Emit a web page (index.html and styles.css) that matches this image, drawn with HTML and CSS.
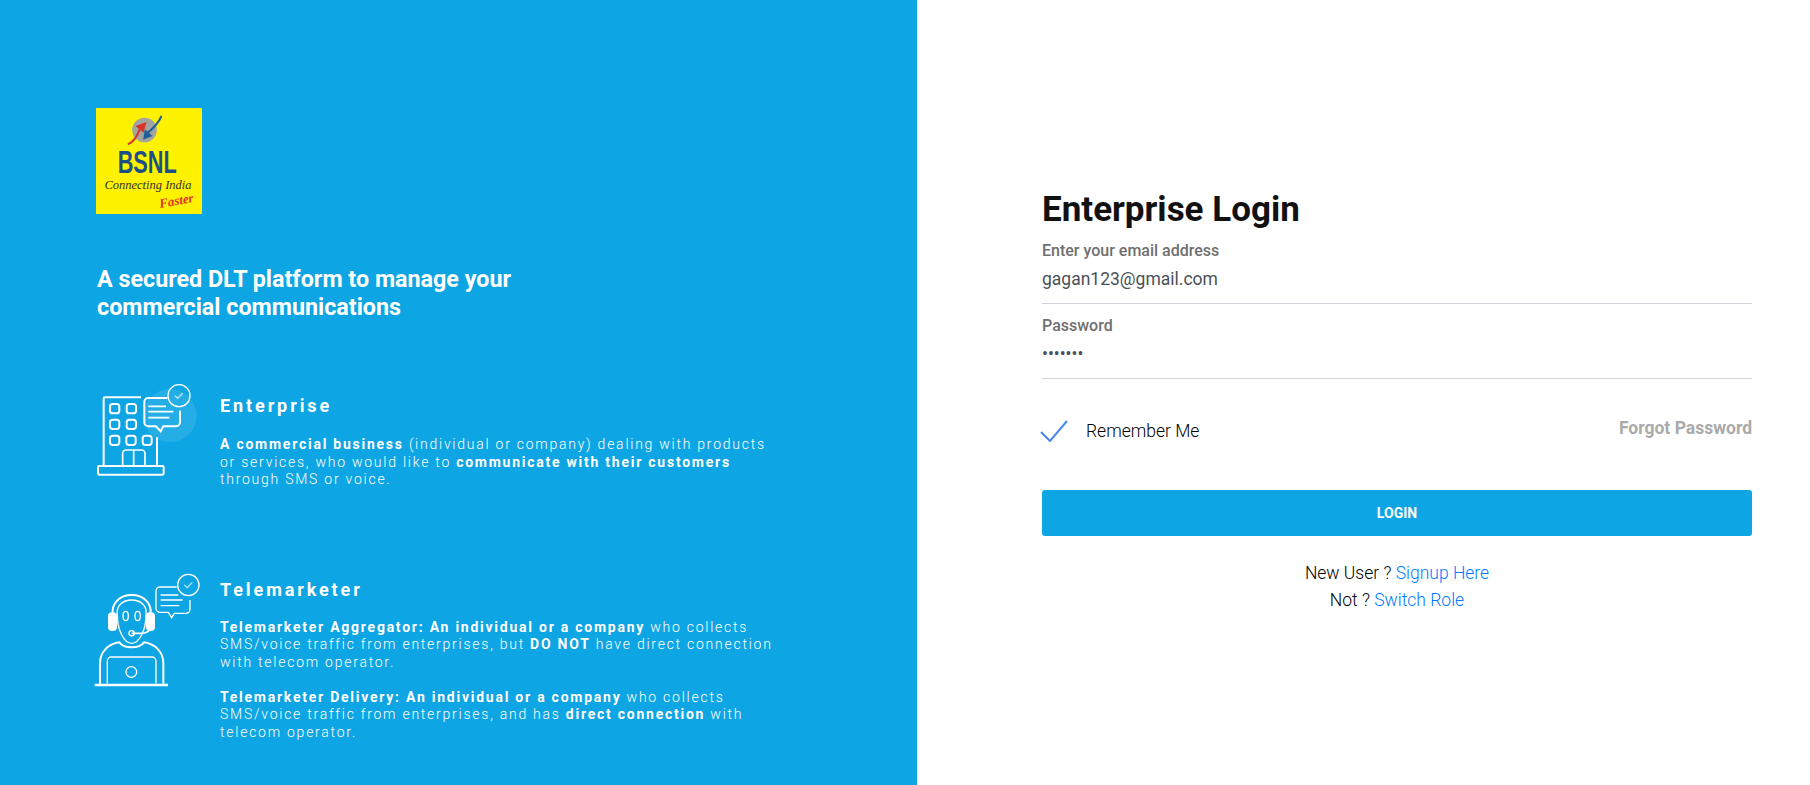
FILE: index.html
```html
<!DOCTYPE html>
<html lang="en">
<head>
  <meta charset="UTF-8">
  <title>Enterprise Login</title>
  <link rel="stylesheet" href="styles.css">
</head>
<body>
  <div class="page">
    <div class="left-panel">
      <div class="logo">
        <svg class="logo-mark" viewBox="135 72 110 96">
          <circle cx="190" cy="120" r="37" fill="#a3a3a0"/>
          <path d="M140 163C155 158 168 140 178 113" fill="none" stroke="#d8352a" stroke-width="6"/>
          <path d="M163 108L196 96L187 128Z" fill="#d8352a"/>
          <path d="M241 78C235 92 220 112 198 130" fill="none" stroke="#1f5f96" stroke-width="6"/>
          <path d="M186 149L191 118L214 138Z" fill="#1f5f96"/>
        </svg>
        <div class="logo-name">BSNL</div>
        <div class="logo-tag">Connecting India</div>
        <div class="logo-faster">Faster</div>
      </div>

      <h1 class="headline">A secured DLT platform to manage your<br>commercial communications</h1>

      <div class="role role-enterprise">
        <svg class="role-icon" viewBox="0 0 420 360" fill="none" stroke="#fff" stroke-width="6">
          <circle cx="270" cy="140" r="80" fill="#fff" fill-opacity=".1" stroke="none"/>
          <path d="M183 85H75a4 4 0 0 0-4 4V290"/>
          <path d="M231 205V290"/>
          <rect x="54" y="291" width="197" height="26" rx="4"/>
          <rect x="90" y="105" width="28" height="28" rx="8"/>
          <rect x="140" y="105" width="28" height="28" rx="8"/>
          <rect x="90" y="152" width="28" height="28" rx="8"/>
          <rect x="140" y="152" width="28" height="28" rx="8"/>
          <rect x="90" y="200" width="28" height="28" rx="8"/>
          <rect x="139" y="200" width="28" height="28" rx="8"/>
          <rect x="188" y="200" width="27" height="28" rx="8"/>
          <path d="M128 290V253a10 10 0 0 1 10-10h47a10 10 0 0 1 10 10V290M161 243V290" stroke-width="5"/>
          <path d="M262 87H205a12 12 0 0 0-12 12V160a12 12 0 0 0 12 12H228L242 187L250 172H288a12 12 0 0 0 12-12V125"/>
          <path d="M205 112H258M205 128H280M205 146H268" stroke-width="5"/>
          <circle cx="297" cy="80" r="33" stroke-width="4"/>
          <path d="M285 80L293 88L308 73" stroke-width="4" stroke-opacity=".7"/>
        </svg>
        <div class="role-text">
          <h2>Enterprise</h2>
          <p><b>A commercial business</b> (individual or company) dealing with products<br>or services, who would like to <b>communicate with their customers</b><br>through SMS or voice.</p>
        </div>
      </div>

      <div class="role role-tele">
        <svg class="role-icon" viewBox="0 0 420 390" fill="none" stroke="#fff" stroke-width="6">
          <path d="M99 150C92 115 120 90 155 90C190 90 218 115 211 150"/>
          <path d="M112 150C108 122 128 105 155 105C182 105 202 122 198 150C198 195 178 235 155 235C132 235 112 195 112 150Z" stroke-width="4"/>
          <rect x="87" y="145" width="21" height="50" rx="9" fill="#fff"/>
          <rect x="201" y="145" width="21" height="50" rx="9" fill="#fff"/>
          <ellipse cx="137" cy="153" rx="8" ry="14" stroke-width="4"/>
          <ellipse cx="173" cy="153" rx="8" ry="14" stroke-width="4"/>
          <path d="M155 205H182C198 205 208 200 211 190" stroke-width="5"/>
          <circle cx="155" cy="205" r="8" stroke-width="4"/>
          <path d="M60 356V295C60 260 85 237 118 232C132 252 178 252 192 232C225 237 250 260 250 295V356"/>
          <path d="M82 356V288a12 12 0 0 1 12-12H216a12 12 0 0 1 12 12V356" stroke-width="4"/>
          <circle cx="154" cy="321" r="16" stroke-width="4"/>
          <path d="M44 360H264" stroke-width="8"/>
          <path d="M290 66H240a12 12 0 0 0-12 12V130a12 12 0 0 0 12 12H265L275 158L283 145H318a12 12 0 0 0 12-12V105" stroke-width="4"/>
          <path d="M242 90H295M242 105H308M242 122H298" stroke-width="4"/>
          <circle cx="325" cy="60" r="32" stroke-width="4"/>
          <path d="M313 60L322 68L337 52" stroke-width="4" stroke-opacity=".7"/>
        </svg>
        <div class="role-text">
          <h2>Telemarketer</h2>
          <p><b>Telemarketer Aggregator: An individual or a company</b> who collects<br>SMS/voice traffic from enterprises, but <b>DO NOT</b> have direct connection<br>with telecom operator.</p>
          <p><b>Telemarketer Delivery: An individual or a company</b> who collects<br>SMS/voice traffic from enterprises, and has <b>direct connection</b> with<br>telecom operator.</p>
        </div>
      </div>
    </div>

    <div class="right-panel">
      <h1 class="login-title">Enterprise Login</h1>
      <label class="field-label">Enter your email address</label>
      <div class="field-value">gagan123@gmail.com</div>
      <label class="field-label">Password</label>
      <div class="field-value">•••••••</div>

      <div class="options">
        <div class="remember">
          <svg class="check" viewBox="0 0 28 22" fill="none" stroke="#4a86f0" stroke-width="2"><path d="M1 12L10 21L27 1"/></svg>
          <span>Remember Me</span>
        </div>
        <a class="forgot">Forgot Password</a>
      </div>

      <button class="login-btn">LOGIN</button>

      <p class="links">New User ? <a>Signup Here</a></p>
      <p class="links">Not ? <a>Switch Role</a></p>
    </div>
  </div>
</body>
</html>
```

FILE: styles.css
```css
html, body { margin: 0; height: 100%; overflow: hidden; }
body { font-family: Roboto, "Liberation Sans", sans-serif; background: #fff; }
.page { display: flex; height: 785px; }

.left-panel { width: 917px; box-sizing: border-box; background: #0da5e3; color: #fff; padding: 108px 0 0 96px; }
.logo { width: 106px; height: 106px; background: #fff200; display: flex; flex-direction: column; align-items: center; position: relative; color: #1b4f86; }
.logo-mark { width: 37px; height: 32px; margin: 6px 10px 0 0; }
.logo-name { font-family: "Liberation Sans", sans-serif; font-weight: bold; font-size: 31px; line-height: 26px; margin: 4px 4px 0 0; transform: scaleX(.7); }
.logo-tag { font-family: "Liberation Serif", serif; font-style: italic; font-size: 12.500px; line-height: 12px; color: #333; margin: 3px 2px 0 0; white-space: nowrap; }
.logo-faster { position: absolute; right: 8px; bottom: 7px; font-family: "Liberation Serif", serif; font-style: italic; font-weight: bold; font-size: 13px; line-height: 12px; color: #e0312a; transform: rotate(-10deg); }

.headline { margin: 52px 0 0 1px; font-size: 23.300px; line-height: 27.500px; font-weight: 700; }

.role { display: flex; }
.role-icon { flex: none; width: 140px; margin-left: -16px; }
.role-enterprise { margin-top: 48px; }
.role-enterprise .role-icon { height: 120px; }
.role-enterprise .role-text { padding-top: 26px; }
.role-tele { margin-top: 59px; }
.role-tele .role-icon { height: 130px; }
.role-tele .role-text { padding-top: 14px; }
.role-text h2 { margin: 0 0 17.500px; font-size: 18px; line-height: 22px; font-weight: 700; letter-spacing: 2.900px; }
.role-enterprise .role-text h2 { margin-bottom: 19px; }
.role-text p { margin: 0 0 17.500px; font-size: 14px; line-height: 17.500px; letter-spacing: 1.750px; font-weight: 300; }
.role-text b { font-weight: 700; }

.right-panel { flex: 1; box-sizing: border-box; padding: 187px 58px 0 125px; }
.login-title { margin: 0; font-size: 35px; line-height: 46px; font-weight: 700; color: #111; }
.field-label { display: block; margin-top: 8.500px; font-size: 16px; line-height: 18px; font-weight: 500; color: #6f6f6f; }
.field-value { font-size: 17.500px; line-height: 24px; padding: 7.500px 0 12px; margin-bottom: 12.500px; border-bottom: 1px solid #ced4da; color: #495057; }
.options { display: flex; justify-content: space-between; margin-top: 40.700px; }
.remember { display: flex; align-items: center; font-size: 17.500px; font-weight: 300; color: #000; }
.check { width: 28px; height: 22px; margin: 0 18px 0 -2px; }
.forgot { font-size: 17.500px; font-weight: 700; color: #aaa; margin-top: -2px; }
.login-btn { display: block; width: 100%; height: 46px; margin-top: 48px; background: #0da5e3; color: #fff; border: none; border-radius: 3px; font-family: inherit; font-size: 14px; font-weight: 700; }
.links { margin: 0; text-align: center; font-size: 17.500px; line-height: 27px; font-weight: 300; color: #000; }
.links:first-of-type { margin-top: 24px; }
.links a { color: #007bff; }
```
